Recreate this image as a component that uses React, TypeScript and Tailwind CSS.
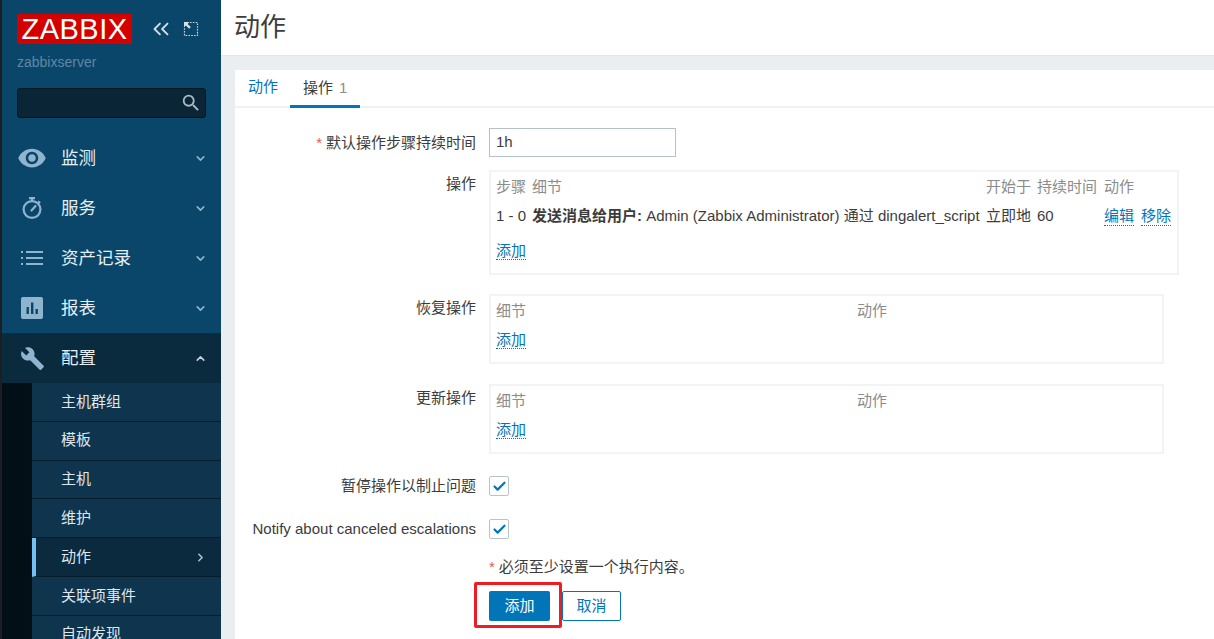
import type { ReactNode } from "react";
import { ChevronDown, ChevronRight, ChevronUp, ChevronsLeft, Check } from "lucide-react";
import { MdBuild, MdSearch, MdVisibility } from "react-icons/md";

const font = "font-['Liberation_Sans','Noto_Sans_CJK_SC',sans-serif]";

function ReportIcon() {
  return (
    <svg viewBox="0 0 24 24" className="size-[24px]" fill="currentColor">
      <rect x="1" y="1" width="22" height="22" rx="2" />
      <rect x="6.5" y="11" width="2.4" height="7" fill="#0a466a" />
      <rect x="11" y="6.5" width="2.4" height="11.5" fill="#0a466a" />
      <rect x="15.5" y="13" width="2.4" height="5" fill="#0a466a" />
    </svg>
  );
}

function TimerIcon() {
  return (
    <svg viewBox="0 0 24 24" className="size-[24px]" fill="none" stroke="currentColor" strokeWidth="2.2">
      <circle cx="12" cy="13.5" r="8.4" />
      <path d="M9 2.2h6M12 2.5v2.5M18 5.2l2 2" />
      <path d="M11.5 14.5l4-4.5" strokeLinecap="round" />
    </svg>
  );
}

function ListIcon() {
  return (
    <svg viewBox="0 0 24 24" className="size-[24px]" fill="none" stroke="currentColor" strokeWidth="2.2">
      <path d="M1 6h2M1 12h2M1 18h2M6 6h17M6 12h17M6 18h17" />
    </svg>
  );
}

function ExpandIcon() {
  return (
    <svg viewBox="0 0 16 16" className="size-[16px]" fill="none" stroke="#c9d6df">
      <path d="M7 1.5h7.5v13H1.5V7" strokeWidth="1.2" strokeDasharray="1.6 1.2" />
      <path d="M1 1h5.5L4.6 2.9l3.2 3.2-1.7 1.7-3.2-3.2L1 6.5z" fill="#d7e1e8" stroke="none" />
    </svg>
  );
}

function NavItem({ icon, label, open }: { icon: ReactNode; label: string; open?: boolean }) {
  return (
    <div className={`flex h-[50px] shrink-0 items-center pr-[14px] ${open ? "bg-[#0a2a3e]" : ""}`}>
      <div className="flex w-[59px] justify-center pl-[1px] text-[#8fb4cd]">{icon}</div>
      <span className="flex-1 pt-[1px] text-[17.5px] text-[#e6eef3]">{label}</span>
      {open ? (
        <ChevronUp className="size-[13px] text-[#c2d2dc]" strokeWidth={3} />
      ) : (
        <ChevronDown className="size-[13px] text-[#8fb4cd]" strokeWidth={3} />
      )}
    </div>
  );
}

function SubItem({ label, active }: { label: string; active?: boolean }) {
  return (
    <div
      className={`flex h-[38.8px] shrink-0 items-center border-b border-[#071c29] pr-[14px] text-[15px] text-[#dfe8ee] ${
        active ? "border-l-[4px] border-l-[#74c0f2] bg-[#0b2a3e] pl-[25px]" : "bg-[#0f344e] pl-[29px]"
      }`}
    >
      <span className="flex-1">{label}</span>
      {active && <ChevronRight className="size-[13px] text-[#a9bfcd]" strokeWidth={3} />}
    </div>
  );
}

function Sidebar() {
  return (
    <aside className="flex h-full w-[221px] shrink-0 flex-col overflow-hidden border-l-2 border-[#1c1f22] bg-[#0a466a]">
      <div className="flex shrink-0 items-center pl-[15px] pt-[14px]">
        <div className="flex h-[30px] w-[115px] items-center justify-center bg-[#d40000] text-[29px] leading-none tracking-[0.5px] text-white">
          ZABBIX
        </div>
        <ChevronsLeft className="ml-[16px] size-[26px] text-[#d3dee6]" strokeWidth={1.7} />
        <div className="ml-[9px]">
          <ExpandIcon />
        </div>
      </div>
      <div className="mt-[9px] shrink-0 pl-[15px] text-[14px] leading-[18px] text-[#5f88a3]">zabbixserver</div>
      <div className="ml-[15px] mt-[17px] flex h-[30px] w-[189px] shrink-0 items-center justify-end rounded-[3px] border border-[#05161f] bg-[#0a2535] pr-[3px]">
        <MdSearch className="size-[22px] text-[#a9bac5]" />
      </div>
      <nav className="mt-[15px] flex shrink-0 flex-col">
        <NavItem icon={<MdVisibility className="size-[30px]" />} label="监测" />
        <NavItem icon={<TimerIcon />} label="服务" />
        <NavItem icon={<ListIcon />} label="资产记录" />
        <NavItem icon={<ReportIcon />} label="报表" />
        <NavItem icon={<MdBuild className="size-[25px]" />} label="配置" open />
        <div className="flex">
          <div className="w-[30px] shrink-0 bg-[#020f17]" />
          <div className="flex flex-1 flex-col">
            <SubItem label="主机群组" />
            <SubItem label="模板" />
            <SubItem label="主机" />
            <SubItem label="维护" />
            <SubItem label="动作" active />
            <SubItem label="关联项事件" />
            <SubItem label="自动发现" />
          </div>
        </div>
      </nav>
    </aside>
  );
}

function DottedLink({ children }: { children: ReactNode }) {
  return (
    <span className="border-b border-dotted border-[#0275b8] leading-[18px] text-[#0275b8]">{children}</span>
  );
}

function Row({
  label,
  required,
  className,
  children,
}: {
  label: string;
  required?: boolean;
  className?: string;
  children: ReactNode;
}) {
  return (
    <div className={`flex ${className ?? ""}`}>
      <div className="w-[241px] shrink-0 text-right text-[15px] leading-[18px] text-[#3c3c3c]">
        {required && <span className="mr-[4px] text-[#e45959]">*</span>}
        {label}
      </div>
      <div className="ml-[13px]">{children}</div>
    </div>
  );
}

function EmptyOps() {
  return (
    <div className="h-[70px] w-[675px] border-2 border-[#f2f3f4] pl-[5px] pt-[6px] text-[15px] leading-[18px]">
      <div className="flex text-[#8c8c8c]">
        <span className="w-[361px]">细节</span>
        <span>动作</span>
      </div>
      <div className="mt-[11px]">
        <DottedLink>添加</DottedLink>
      </div>
    </div>
  );
}

function CheckBox() {
  return (
    <div className="flex size-[20px] items-center justify-center rounded-[2px] border border-[#b8c4cb] bg-white">
      <Check className="size-[15px] text-[#0275b8]" strokeWidth={3.5} />
    </div>
  );
}

export default function App() {
  return (
    <div className={`flex h-screen w-full overflow-hidden bg-[#ebeef0] ${font}`}>
      <Sidebar />
      <main className="flex min-w-0 flex-1 flex-col">
        <header className="flex h-[56px] shrink-0 items-center border-b border-[#e4e6e8] bg-white pl-[13px] text-[26px] text-[#3c3c3c]">
          动作
        </header>
        <div className="relative ml-[14px] mt-[14px] flex-1 bg-white">
          <div className="flex h-[38px] border-b-2 border-[#f0f1f2] pl-[13px] text-[15px]">
            <span className="flex h-[38px] items-center pb-[4px] text-[#0275b8]">动作</span>
            <span className="ml-[12px] flex h-[38px] items-center border-b-[3px] border-[#0275b8] px-[13px] pt-[1px] text-[#3c3c3c]">
              操作<span className="ml-[6px] text-[#8c8c8c]">1</span>
            </span>
          </div>

          <div className="pt-[20px]">
            <Row label="默认操作步骤持续时间" required className="items-center">
              <div className="flex h-[29px] w-[187px] items-center border border-[#b3c1c9] pl-[6px] text-[15px] text-[#3c3c3c]">
                1h
              </div>
            </Row>

            <Row label="操作" className="mt-[13px] [&>div:first-child]:pt-[5px]">
              <div className="h-[105px] w-[690px] border-2 border-[#f2f3f4] pl-[5px] pt-[6px] text-[15px] leading-[18px]">
                <div className="flex text-[#8c8c8c]">
                  <span className="w-[36px]">步骤</span>
                  <span className="w-[454px]">细节</span>
                  <span className="w-[51px]">开始于</span>
                  <span className="w-[67px]">持续时间</span>
                  <span>动作</span>
                </div>
                <div className="mt-[11px] flex whitespace-nowrap text-[#3c3c3c]">
                  <span className="w-[36px]">1 - 0</span>
                  <span className="w-[454px]">
                    <b>发送消息给用户:</b> Admin (Zabbix Administrator) 通过 dingalert_script
                  </span>
                  <span className="w-[51px]">立即地</span>
                  <span className="w-[67px]">60</span>
                  <span className="flex gap-[7px]">
                    <DottedLink>编辑</DottedLink>
                    <DottedLink>移除</DottedLink>
                  </span>
                </div>
                <div className="mt-[16px]">
                  <DottedLink>添加</DottedLink>
                </div>
              </div>
            </Row>

            <Row label="恢复操作" className="mt-[19px] [&>div:first-child]:pt-[5px]">
              <EmptyOps />
            </Row>

            <Row label="更新操作" className="mt-[20px] [&>div:first-child]:pt-[5px]">
              <EmptyOps />
            </Row>

            <Row label="暂停操作以制止问题" className="mt-[22px] items-center">
              <CheckBox />
            </Row>

            <Row label="Notify about canceled escalations" className="mt-[23px] items-center">
              <CheckBox />
            </Row>

            <Row label="" className="mt-[19px]">
              <div className="text-[15px] leading-[18px] text-[#3c3c3c]">
                <span className="mr-[4px] text-[#e45959]">*</span>必须至少设置一个执行内容。
              </div>
              <div className="relative mt-[15px] flex gap-[12px] text-[15px]">
                <div className="flex h-[30px] w-[61px] items-center justify-center rounded-[2px] bg-[#0275b8] text-white">
                  添加
                </div>
                <div className="flex h-[30px] w-[59px] items-center justify-center rounded-[2px] border border-[#0275b8] text-[#0275b8]">
                  取消
                </div>
                <div className="absolute -left-[15px] -top-[9px] h-[46px] w-[88px] rounded-[2px] border-[3px] border-[#ee1c25]" />
              </div>
            </Row>
          </div>
        </div>
      </main>
    </div>
  );
}
